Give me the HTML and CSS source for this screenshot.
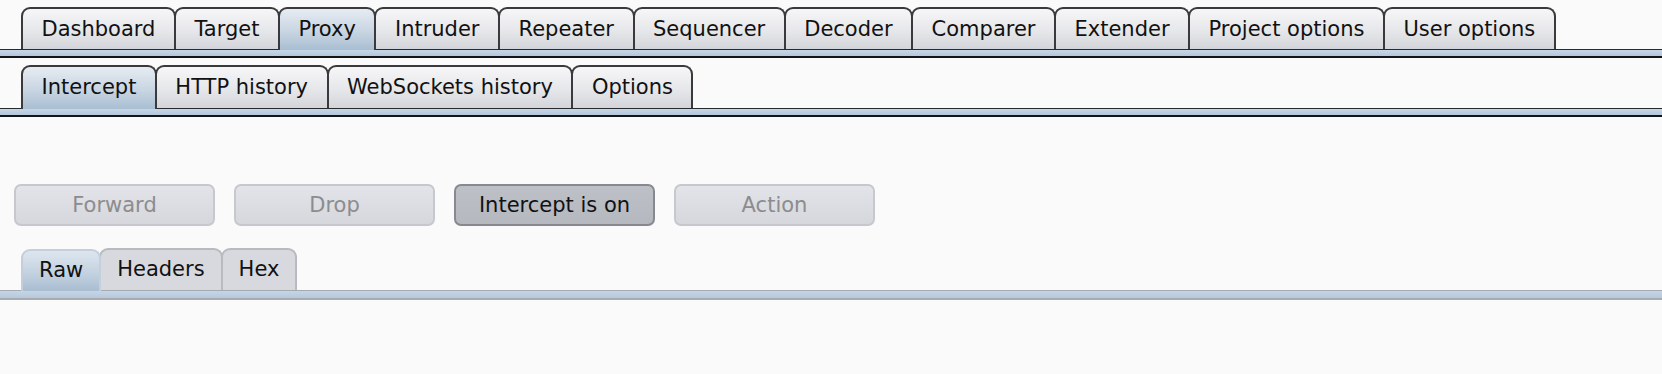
FILE: index.html
```html
<!DOCTYPE html>
<html lang="en">
<head>
    <title>Proxy - Intercept</title>
    <link rel="stylesheet" href="styles.css">
</head>
<body>
    <div class="tabstrip main">
        <div class="tab">Dashboard</div>
        <div class="tab">Target</div>
        <div class="tab selected">Proxy</div>
        <div class="tab">Intruder</div>
        <div class="tab">Repeater</div>
        <div class="tab">Sequencer</div>
        <div class="tab">Decoder</div>
        <div class="tab">Comparer</div>
        <div class="tab">Extender</div>
        <div class="tab">Project options</div>
        <div class="tab">User options</div>
    </div>
    <div class="band"></div>

    <div class="tabstrip sub">
        <div class="tab selected">Intercept</div>
        <div class="tab">HTTP history</div>
        <div class="tab">WebSockets history</div>
        <div class="tab">Options</div>
    </div>
    <div class="band"></div>

    <div class="toolbar">
        <button class="btn" disabled>Forward</button>
        <button class="btn" disabled>Drop</button>
        <button class="btn pressed">Intercept is on</button>
        <button class="btn" disabled>Action</button>
    </div>

    <div class="tabstrip view">
        <div class="tab selected">Raw</div>
        <div class="tab">Headers</div>
        <div class="tab">Hex</div>
    </div>
    <div class="band light"></div>
</body>
</html>
```

FILE: styles.css
```css
body {
    margin: 0;
    background-color: #fafafa;
    font-family: "DejaVu Sans", "Noto Sans", sans-serif;
    font-size: 21px;
    color: #111;
}
.tabstrip {
    display: flex;
    align-items: flex-end;
    padding-left: 21px;
}
.tabstrip.main {
    padding-top: 7px;
}
.tabstrip.sub {
    padding-top: 7px;
}
.tab {
    position: relative;
    height: 40px;
    line-height: 40px;
    padding: 0 18.5px;
    border: 2px solid #3a3a3c;
    border-bottom: none;
    border-radius: 9px 9px 0 0;
    background: linear-gradient(#f6f6f8, #e6e7ea 55%, #d4d5da);
    white-space: nowrap;
}
.tab + .tab {
    margin-left: -2px;
}
.tab.selected {
    z-index: 1;
    margin-bottom: -1px;
    height: 41px;
    background: linear-gradient(#e6ecf2, #c8d5e2 55%, #a9bed2);
}
.tabstrip.sub .tab {
    height: 41px;
    line-height: 41px;
}
.tabstrip.sub .tab.selected {
    height: 42px;
}
.band {
    height: 6px;
    border-top: 1px solid #2a2a2c;
    border-bottom: 2px solid #151517;
    background: linear-gradient(#c6d6e6, #b4c8dc);
}
.toolbar {
    display: flex;
    gap: 19px;
    padding: 67px 0 0 14px;
}
.btn {
    width: 201px;
    height: 42px;
    border: 2px solid #c6c8cd;
    border-radius: 7px;
    background: linear-gradient(#e2e4e9, #d5d7dc);
    font-family: inherit;
    font-size: 21px;
    color: #111;
    padding: 0;
}
.btn:disabled {
    color: #8c8c8e;
}
.btn.pressed {
    border-color: #88898e;
    background: linear-gradient(#bdc0c6, #b5b8bf);
}
.tabstrip.view {
    padding-top: 22px;
}
.tabstrip.view .tab {
    height: 40px;
    line-height: 39px;
    padding: 0 16px;
    border-color: #b8babf;
    background: #d8d9de;
}
.tabstrip.view .tab.selected {
    border-color: #c4cfdb;
    background: linear-gradient(#dde6ef, #c3d2e0 55%, #a8bdd1);
}
.band.light {
    height: 7px;
    border-top: 1px solid #a6a9b0;
    border-bottom: 2px solid #a9a9b0;
    background: linear-gradient(#c4d5e6, #b6c9dc);
}
```
